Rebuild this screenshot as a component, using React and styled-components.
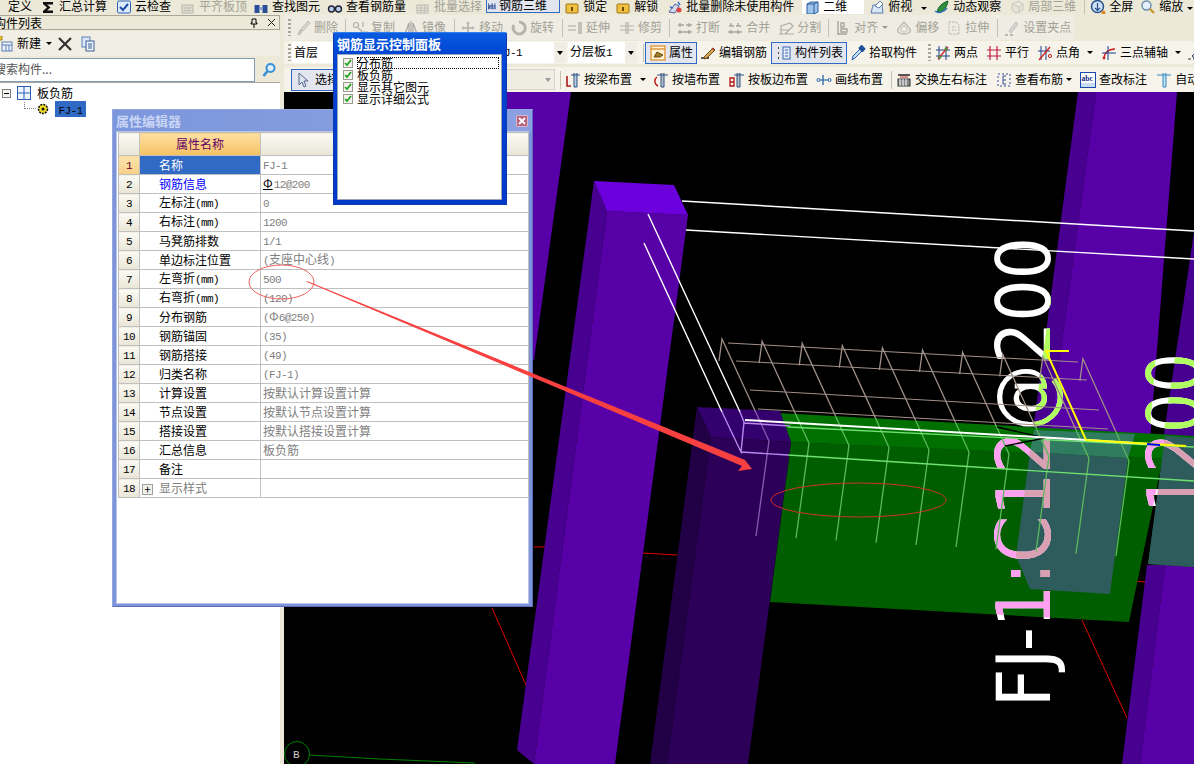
import React from "react";
import styled, { createGlobalStyle } from "styled-components";

const GlobalStyle = createGlobalStyle`
  html, body {
    margin: 0;
    padding: 0;
    background: #ece9d8;
  }
  body {
    font-family: "Noto Sans CJK SC", "Liberation Sans", sans-serif;
    font-size: 12px;
    color: #000;
  }
`;

const Page = styled.div`
  position: relative;
  width: 1194px;
  height: 764px;
  overflow: hidden;
  background: #ece9d8;
  line-height: 14px;
`;

const TopBar = styled.div`
  display: flex;
  align-items: flex-end;
  height: 14px;
  overflow: hidden;
  padding-left: 8px;
  box-sizing: border-box;
  white-space: nowrap;
  & > * { margin-bottom: -2px; }
`;

const Body = styled.div`
  display: flex;
  height: 750px;
`;

const LeftPanel = styled.div`
  width: 280px;
  display: flex;
  flex-direction: column;
  flex-shrink: 0;
`;

const PanelHead = styled.div`
  display: flex;
  align-items: center;
  height: 15px;
  margin-top: 1px;
  border: 1px solid #aca899;
  border-left: 0;
  box-sizing: border-box;
  padding-right: 3px;
  background: #ece9d8;
  span { margin-left: -6px; flex: 1; }
  svg { margin-left: 8px; }
`;

const PanelTools = styled.div`
  display: flex;
  align-items: center;
  height: 25px;
  margin-top: 1px;
  background: #f1efe5;
`;

const SearchRow = styled.div`
  display: flex;
  height: 24px;
  margin-top: 2px;
  gap: 3px;
`;

const SearchBox = styled.div`
  width: 255px;
  box-sizing: border-box;
  background: #fff;
  border: 1px solid #7f9db9;
  border-left: 0;
  color: #555;
  display: flex;
  align-items: center;
  overflow: hidden;
  span { margin-left: -6px; margin-top: -2px; white-space: nowrap; }
`;

const SearchBtn = styled.div`
  flex: 1;
  display: flex;
  align-items: center;
  justify-content: center;
`;

const Tree = styled.div`
  flex: 1;
  background: #fff;
  padding-top: 2px;
  border-top: 1px solid #aca899;
`;

const TreeRow = styled.div`
  display: flex;
  align-items: center;
  height: 16px;
  padding-left: ${(p) => p.$indent}px;
`;

const Expander = styled.span`
  width: 9px;
  height: 9px;
  box-sizing: border-box;
  border: 1px solid #808080;
  position: relative;
  margin-right: 6px;
  background: #f4f4f0;
  &::after {
    content: "";
    position: absolute;
    left: 1px;
    right: 1px;
    top: 3px;
    height: 1px;
    background: #000;
  }
`;

const TreeText = styled.span`
  margin-left: 6px;
`;

const Dots = styled.span`
  width: 12px;
  height: 7px;
  margin-top: -7px;
  margin-right: 1px;
  border-left: 1px dotted #808080;
  border-bottom: 1px dotted #808080;
  box-sizing: border-box;
`;

const Picked = styled.span`
  background: #316ac5;
  color: #000;
  width: 31px;
  height: 16px;
  line-height: 16px;
  text-align: center;
  margin-left: 6px;
`;

const Splitter = styled.div`
  width: 4px;
  flex-shrink: 0;
`;

const RightSide = styled.div`
  flex: 1;
  display: flex;
  flex-direction: column;
  min-width: 0;
`;

const ToolRow = styled.div`
  display: flex;
  align-items: center;
  height: ${(p) => p.$h || 25}px;
  margin-top: ${(p) => p.$mt || 0}px;
  flex-shrink: 0;
  background: ${(p) => p.$bg || "#f5f3ea"};
  width: ${(p) => (p.$fit ? "791px" : "auto")};
  border-radius: 3px;
  white-space: nowrap;
  overflow: hidden;
`;

const ToolBox = styled.div`
  display: flex;
  align-items: center;
  flex-shrink: 0;
  height: ${(p) => (p.$tight ? "18px" : p.$active ? "22px" : "18px")};
  gap: ${(p) => (p.$tight ? 0 : 3)}px;
  margin-left: ${(p) => p.$ml || 0}px;
  color: ${(p) => (p.$off ? "#a3a196" : "#000")};
  box-sizing: border-box;
  padding: ${(p) => (p.$tight ? "4px 12px 0 1px" : p.$active ? "0 3px 0 4px" : "0")};
  border: ${(p) => (p.$active ? "1px solid #316ac5" : "0")};
  background: ${(p) => (p.$active ? "#e3e6ee" : "transparent")};
  svg { opacity: ${(p) => (p.$off ? 0.42 : 1)}; }
`;

const TopActive = styled.div`
  display: flex;
  align-self: flex-end;
  margin-bottom: 1px !important;
`;

const ToolLabel = styled.span`
  margin-top: -2px;
`;

const IconBox = styled.span`
  display: flex;
  width: ${(p) => p.$w || 16}px;
  height: 16px;
  flex-shrink: 0;
`;

const Sep = styled.span`
  width: 1px;
  height: 18px;
  flex-shrink: 0;
  background: #c5c2b2;
  margin-left: ${(p) => p.$ml}px;
`;

const Caret = styled.span`
  width: 0;
  height: 0;
  flex-shrink: 0;
  align-self: center;
  border-left: 3px solid transparent;
  border-right: 3px solid transparent;
  border-top: 3px solid ${(p) => (p.$off ? "#999" : "#000")};
  margin-left: ${(p) => p.$ml}px;
`;

const Grip = styled.span`
  width: 3px;
  height: 17px;
  flex-shrink: 0;
  margin-left: ${(p) => p.$ml}px;
  background: repeating-linear-gradient(to bottom, #a8a698 0 2px, transparent 2px 4px);
`;

const Combo = styled.div`
  display: flex;
  align-items: center;
  justify-content: space-between;
  flex-shrink: 0;
  box-sizing: border-box;
  height: 21px;
  width: ${(p) => p.$w}px;
  margin-left: ${(p) => p.$ml || 0}px;
  padding-left: ${(p) => p.$pad || 2}px;
  background: ${(p) => (p.$off ? "#efede2" : "#fff")};
  border: ${(p) => (p.$off ? "1px solid #d8d5c6" : "0")};
`;

const ComboArrow = styled.span`
  width: 12px;
  height: 100%;
  display: flex;
  align-items: center;
  justify-content: center;
  background: #f0eee4;
  &::after {
    content: "";
    border-left: 3px solid transparent;
    border-right: 3px solid transparent;
    border-top: 4px solid ${(p) => (p.$off ? "#999" : "#000")};
  }
`;

const TopCombo = styled(Combo)`
  height: 18px;
  gap: 2px;
  justify-content: flex-start;
  padding-left: 3px;
`;

const Viewport = styled.div`
  flex: 1;
  background: #000;
  overflow: hidden;
  svg { display: block; }
`;

const Lat = styled.span`
  font-family: "Liberation Mono", monospace;
  font-size: 11px;
  letter-spacing: -0.6px;
`;

const EditorWindow = styled.div`
  position: absolute;
  left: 112px;
  top: 109px;
  width: 421px;
  height: 498px;
  box-sizing: border-box;
  display: flex;
  flex-direction: column;
  background: #7d93da;
  border: 1px solid #93a6de;
  border-right-color: #5a6cc0;
  border-bottom-color: #5a6cc0;
  z-index: 2;
`;

const EditorTitle = styled.div`
  display: flex;
  align-items: center;
  justify-content: space-between;
  height: 22px;
  flex-shrink: 0;
  padding: 0 4px 0 3px;
  background: linear-gradient(to right, #7c97dc, #8aa0e2);
  color: #c9d5f5;
  font-weight: 700;
  font-size: 13px;
`;

const CloseBtn = styled.span`
  width: 12px;
  height: 12px;
  box-sizing: border-box;
  border: 1px solid #d9b8c8;
  border-radius: 1px;
  background: #b9607f;
  display: flex;
  align-items: center;
  justify-content: center;
`;

const EditorBody = styled.div`
  flex: 1;
  margin: 0 4px 3px 4px;
  background: #fff;
  padding-left: 1px;
  box-shadow: 0 0 0 1px #b9c4e8;
`;

const Table = styled.table`
  border-collapse: collapse;
  table-layout: fixed;
  width: 410px;
  td, th {
    border: 1px solid #c0c0c0;
    padding: 0;
    height: 19px;
    line-height: 16px;
    font-weight: 400;
    box-sizing: border-box;
    overflow: hidden;
    white-space: nowrap;
  }
`;

const HeadIndex = styled.th`
  height: 23px !important;
  background: linear-gradient(to bottom, #fbfaf4, #e9e6d6);
`;

const HeadName = styled.th`
  height: 23px !important;
  color: #660066;
  background: linear-gradient(to bottom, #fde0a4, #f4c161);
`;

const HeadValue = styled.th`
  height: 23px !important;
  background: linear-gradient(to bottom, #fbfaf4, #e9e6d6);
`;

const IndexCell = styled.td`
  text-align: center;
  color: ${(p) => (p.$current ? "#660033" : "#000")};
  background: ${(p) => (p.$current ? "linear-gradient(to bottom, #fde4ad, #f7cf85)" : "linear-gradient(to bottom, #fbfaf4, #e9e6d6)")};
`;

const NameCell = styled.td`
  color: ${(p) => p.$color || "#000"};
  background: ${(p) => (p.$current ? "#316ac5" : "#fff")};
  padding-left: ${(p) => (p.$plus ? "2px" : "19px")} !important;
`;

const ValueCell = styled.td`
  color: #808080;
  padding-left: 2px !important;
`;

const PlusBox = styled.span`
  display: inline-flex;
  align-items: center;
  justify-content: center;
  width: 11px;
  height: 11px;
  box-sizing: border-box;
  border: 1px solid #a0a0a0;
  background: #f0f0ea;
  color: #000;
  margin-right: 6px;
  vertical-align: -1px;
  font-size: 11px;
  line-height: 9px;
`;

const RebarMark = styled.span`
  color: #000;
  text-decoration: ${(p) => (p.$under ? "underline" : "none")};
  margin-right: 1px;
`;

const ControlPanel = styled.div`
  position: absolute;
  left: 333px;
  top: 32px;
  width: 174px;
  height: 173px;
  box-sizing: border-box;
  display: flex;
  flex-direction: column;
  background: linear-gradient(to bottom, #0a5ce0, #0046d4 20px, #0038c8);
  border: 1px solid #0a3cb0;
  border-top-color: #2f7cf0;
  border-radius: 2px 2px 0 0;
  z-index: 3;
`;

const ControlTitle = styled.div`
  height: 20px;
  flex-shrink: 0;
  padding-left: 3px;
  padding-top: 3px;
  box-sizing: border-box;
  color: #fff;
  font-weight: 700;
  font-size: 13px;
  line-height: 15px;
`;

const ControlList = styled.div`
  flex: 1;
  margin: 1px 4px 4px 3px;
  background: #fff;
  border: 1px solid #9aa4b4;
  padding-top: 2px;
`;

const ControlItem = styled.div`
  display: flex;
  align-items: center;
  height: 12px;
  line-height: 12px;
  padding-left: 5px;
  gap: 4px;
`;

const CheckBox = styled.span`
  display: flex;
  width: 10px;
  height: 10px;
  box-sizing: border-box;
  border: 1px solid #9a9a8e;
  background: #f2f2ea;
  flex-shrink: 0;
`;

const ItemLabel = styled.span`
  flex: 1;
  margin-right: 2px;
  outline: ${(p) => (p.$focus ? "1px dotted #000" : "none")};
  outline-offset: -1px;
`;

const Overlay = styled.svg`
  position: absolute;
  left: 0;
  top: 0;
  width: 1194px;
  height: 764px;
  pointer-events: none;
  z-index: 4;
`;

const icons = {
  sigma: <path d="M3 3h10v2.5H7l3.5 3L7 11.5h6V14H3v-2l4-3.5L3 5z" fill="#111" />,
  check: (
    <>
      <rect x="1.5" y="2" width="13" height="12" rx="1.5" fill="#dceafc" stroke="#2a5fb8" />
      <path d="M4 8l3 3 5-6" fill="none" stroke="#1c4fa8" strokeWidth="2" />
    </>
  ),
  doc: (
    <>
      <rect x="2" y="6" width="11" height="8" fill="#c8c8c0" stroke="#777" />
      <path d="M4 9h7M4 11.5h7" stroke="#777" />
    </>
  ),
  find: (
    <>
      <rect x="1.5" y="6" width="5" height="8" fill="#2a4f96" />
      <rect x="9.5" y="6" width="5" height="8" fill="#2a4f96" />
      <rect x="6.5" y="8" width="3" height="3" fill="#8aa4d4" />
    </>
  ),
  glasses: (
    <>
      <circle cx="4.5" cy="10" r="3" fill="#b8d0ec" stroke="#223" strokeWidth="1.4" />
      <circle cx="11.5" cy="10" r="3" fill="#b8d0ec" stroke="#223" strokeWidth="1.4" />
    </>
  ),
  selectGrid: (
    <>
      <path d="M2 6h11v8H2z" fill="#ddd" stroke="#777" />
      <path d="M2 9h11M2 11.5h11M6 6v8M9.5 6v8" stroke="#888" />
    </>
  ),
  rebar3d: <path d="M1 4v9M6 4v9M10 4v9M0 8h11M0 11h11M1 11l5-5" fill="none" stroke="#1d3f8a" strokeWidth="1.2" />,
  lock: (
    <>
      <rect x="2" y="5" width="12" height="9" rx="1" fill="#f0c040" stroke="#a07010" />
      <rect x="7" y="8" width="2" height="4" fill="#704a00" />
    </>
  ),
  eraser: (
    <>
      <path d="M2 13l6-8 4 2-4 7z" fill="#d8d8e8" stroke="#5060a0" />
      <circle cx="12" cy="11" r="2.5" fill="#e04040" />
      <path d="M3 8l3 1M11 3l2 3" stroke="#3a70d0" strokeWidth="1.5" />
    </>
  ),
  box3d: (
    <>
      <path d="M2 5l4-2 7 0v10l-4 2H2z" fill="#9ec4ec" stroke="#2b5c9c" />
      <path d="M9 5v10M2 5h7l4-2" fill="none" stroke="#2b5c9c" />
    </>
  ),
  topView: (
    <>
      <path d="M2 14l2-8h9l1 8z" fill="#d8e6f6" stroke="#5a7eb0" />
      <path d="M6 7l5-5 3 3-4 4z" fill="#fff" stroke="#5a7eb0" />
    </>
  ),
  orbit: (
    <>
      <path d="M3 13c1-5 5-9 11-11-1 6-4 10-8 11z" fill="#2f8f3f" stroke="#14602a" />
      <path d="M1 12c4 3 9 1 12-3" fill="none" stroke="#3070c0" strokeWidth="1.4" />
    </>
  ),
  local3d: <path d="M3 5l7-3 4 3v6l-7 3-4-3z M3 5l7 3 4-3M10 8v6" fill="#ddd" stroke="#999" />,
  fullscreen: (
    <>
      <circle cx="7.5" cy="7.5" r="6" fill="#cfe0f4" stroke="#25508c" strokeWidth="1.5" />
      <path d="M7.5 4v7M5 9l2.5 2.5L10 9" fill="none" stroke="#25508c" strokeWidth="1.2" />
      <circle cx="13.5" cy="13.5" r="2" fill="#e08a20" />
    </>
  ),
  zoom: (
    <>
      <circle cx="6.5" cy="6.5" r="4.5" fill="#e4f0fc" stroke="#6a8ab0" strokeWidth="1.4" />
      <path d="M10 10l4 4" stroke="#c8982a" strokeWidth="2.4" />
    </>
  ),
  brush: (
    <>
      <path d="M2 15l3-6 3 2-3 4z" fill="#888" />
      <path d="M6 9L13 1l2 2-7 8z" fill="#bbb" stroke="#777" />
    </>
  ),
  copy: (
    <>
      <circle cx="4" cy="5" r="2.5" fill="none" stroke="#555" strokeWidth="1.2" />
      <path d="M6 8l4 3M11 2v5M9 12h6v3H9z" fill="none" stroke="#555" strokeWidth="1.2" />
    </>
  ),
  mirror: <path d="M8 1v14M2 14L6 3v11zM14 14L10 3v11z" fill="none" stroke="#444" strokeWidth="1.2" />,
  move: <path d="M8 1l2 3H9v3h3V6l3 2-3 2V9H9v3h1l-2 3-2-3h1V9H4v1L1 8l3-2v1h3V4H6z" fill="#777" />,
  rotate: <path d="M8 2a6 6 0 1 1-5 3" fill="none" stroke="#666" strokeWidth="3" />,
  extend: <path d="M1 6h8M1 10h8M12 2v12M14 2v12" fill="none" stroke="#444" strokeWidth="1.2" />,
  trim: <path d="M1 6h14M1 10h14M7 2v12M9 2v12" fill="none" stroke="#666" strokeWidth="1.2" />,
  breakLine: <path d="M1 5h6M9 5h6M1 12h14M3 3v4M12 3v4M3 10v4M12 10v4" fill="none" stroke="#444" strokeWidth="1.4" />,
  merge: <path d="M1 12h14M4 3v3M11 3v3M2 6h5M9 6h5M4 10v4M11 10v4" fill="none" stroke="#444" strokeWidth="1.4" />,
  split: <path d="M1 14h15M3 14V6l9-3M12 3l3 3-8 8M3 10h8" fill="none" stroke="#555" strokeWidth="1.2" />,
  align: <path d="M3 1v14M3 14h9M6 3h3v4H6zM6 9h6v3H6z" fill="none" stroke="#444" strokeWidth="1.4" />,
  offset: (
    <>
      <path d="M8 2l6 7c1 4-2 5-6 5S1 13 2 9z" fill="none" stroke="#777" strokeWidth="1.4" />
      <path d="M8 5l3 4c1 2-1 3-3 3s-4-1-3-3z" fill="none" stroke="#777" />
    </>
  ),
  stretch: <path d="M3 2h7l3 3v9H3zM6 7h4M6 10h4" fill="none" stroke="#666" strokeDasharray="2 1" />,
  grips: (
    <>
      <path d="M5 11L12 2l2 2-7 9z" fill="#bbb" stroke="#777" />
      <path d="M1 15h3M6 15h3" stroke="#444" strokeWidth="1.4" />
    </>
  ),
  prop: (
    <>
      <rect x="1" y="1" width="14" height="14" fill="#fff3d8" stroke="#e09a3e" strokeWidth="1.4" />
      <path d="M1 4h14" stroke="#e09a3e" strokeWidth="1.4" />
      <path d="M4 12l3-5 6 3-3 2z" fill="#a07a28" stroke="#6a5018" />
    </>
  ),
  editRebar: (
    <>
      <path d="M1 13h8" stroke="#222" strokeWidth="1.4" />
      <path d="M5 11l8-8 2 2-8 8-3 1z" fill="#d8a850" stroke="#6a4818" />
      <path d="M12 3l2 2" stroke="#c03030" strokeWidth="1.4" />
    </>
  ),
  list: (
    <>
      <path d="M2 3h2M2 8h2M2 13h2" stroke="#444" strokeWidth="2" strokeDasharray="1 1" />
      <rect x="7" y="2" width="7" height="12" fill="#e4ecf8" stroke="#3868b0" />
      <path d="M9 5h3M9 8h3M9 11h3" stroke="#3868b0" />
    </>
  ),
  pick: (
    <>
      <path d="M2 15l1-4 7-7 2 2-7 7z" fill="#c8e0f8" stroke="#1f5aa8" />
      <rect x="9" y="1" width="6" height="5" rx="1" transform="rotate(45 12 3.5)" fill="#1f4f98" />
    </>
  ),
  twoPoints: (
    <>
      <path d="M4 1v14M11 1v14M1 5h14M1 11h14" stroke="#1d3f8a" />
      <path d="M3 14L13 2" stroke="#d02020" strokeWidth="1.3" />
      <circle cx="5" cy="12" r="1.5" fill="#50902a" />
      <circle cx="11" cy="4" r="1.5" fill="#50902a" />
    </>
  ),
  parallel: <path d="M4 1v14M11 1v14M1 5h14M1 11h14" stroke="#c02040" strokeWidth="1.2" />,
  pointAngle: (
    <>
      <path d="M4 1v14M9 1v14M1 6h12" stroke="#1d3f8a" />
      <path d="M2 15L13 2" stroke="#d02020" strokeWidth="1.3" />
      <circle cx="13" cy="11" r="1.6" fill="none" stroke="#d02020" />
    </>
  ),
  threePoint: (
    <>
      <path d="M3 14c0-6 4-10 11-10" fill="none" stroke="#d02020" strokeWidth="1.3" />
      <path d="M7 1v14M1 8h14" stroke="#1d3f8a" />
      <circle cx="3" cy="13" r="1.4" fill="#d02020" />
    </>
  ),
  more: <path d="M1 14h3M6 14h3M5 11l6-6 2 2-6 6z" fill="#bcd" stroke="#345" />,
  cursor: <path d="M3 1v12l3-3 2 5 2-1-2-5h4z" fill="#dde4f0" stroke="#56688a" />,
  beamPlace: (
    <>
      <path d="M2 4v10h4" fill="none" stroke="#b01818" strokeWidth="1.6" />
      <path d="M6 3h9M9 1v14h3V1" fill="#b8d0e8" stroke="#30507e" />
    </>
  ),
  wallPlace: (
    <>
      <path d="M4 5c-3 2-3 7 1 9" fill="none" stroke="#c01818" strokeWidth="1.4" />
      <path d="M4 3h11M8 1v14h3V1" fill="#b8bec8" stroke="#30507e" />
    </>
  ),
  edgePlace: (
    <>
      <path d="M1 6h4v8H1zM1 10h4" fill="none" stroke="#b01818" strokeWidth="1.3" />
      <path d="M5 3h10M8 1v14h3V1" fill="#b8bec8" stroke="#30507e" />
    </>
  ),
  linePlace: (
    <>
      <path d="M1 8h14M7 3v10" stroke="#1f58a8" strokeWidth="1.2" />
      <circle cx="2.5" cy="8" r="1.5" fill="#fff" stroke="#1f58a8" />
      <circle cx="13.5" cy="8" r="1.5" fill="#fff" stroke="#1f58a8" />
    </>
  ),
  swap: (
    <>
      <path d="M2 3h12" stroke="#222" strokeWidth="1.4" />
      <rect x="2" y="7" width="12" height="7" fill="#8a8a8a" stroke="#333" />
      <path d="M4 7v7M7 7v7M10 7v7" stroke="#fff" />
      <path d="M4 5h8" stroke="#c03030" />
    </>
  ),
  viewRebar: (
    <>
      <rect x="2" y="2" width="12" height="12" fill="none" stroke="#3a4a9a" strokeDasharray="2 2" />
      <path d="M10 4H7v8h3M7 8h3" fill="none" stroke="#3a4a9a" />
    </>
  ),
  autoPlace: <path d="M1 3h14M7 1v14h3V1" fill="#bfe0f4" stroke="#3a8ac0" />,
  newItem: (
    <>
      <rect x="4" y="6" width="10" height="9" fill="#eef4fc" stroke="#5a7eb8" />
      <path d="M4 9h10M8 9v6M11 9v6" stroke="#5a7eb8" />
      <path d="M0 0h4v4H0z" fill="#f0c838" stroke="#a88010" />
    </>
  ),
  cross: <path d="M2 2l12 12M14 2L2 14" stroke="#333" strokeWidth="2.2" />,
  copyDoc: (
    <>
      <rect x="2" y="1" width="8" height="10" fill="#dce8f8" stroke="#5a7eb8" />
      <rect x="6" y="5" width="8" height="10" fill="#eef4fc" stroke="#3a5f98" />
      <path d="M8 8h4M8 10h4M8 12h4" stroke="#3a5f98" />
    </>
  ),
};

const Icon = ({ name }) => (
  <svg width="16" height="16" viewBox="0 0 16 16">
    {icons[name]}
  </svg>
);

const AbcIcon = () => (
  <svg width="16" height="16" viewBox="0 0 16 16">
    <rect x="0.5" y="0.5" width="15" height="15" fill="#fff" stroke="#1c48b0" />
    <rect x="1" y="11" width="14" height="4" fill="#c8dcf4" />
    <text x="1.5" y="9" fontSize="7.5" fontWeight="700" fontFamily="Liberation Serif, serif" fill="#102a80">abc</text>
  </svg>
);

// margin-left of every item is the free space after the one before it
const topItems = [
  { label: "定义" },
  { icon: "sigma", label: "汇总计算", ml: 8 },
  { icon: "check", label: "云检查", ml: 9 },
  { icon: "doc", label: "平齐板顶", ml: 9, off: true },
  { icon: "find", label: "查找图元", ml: 6 },
  { icon: "glasses", label: "查看钢筋量", ml: 7 },
  { icon: "selectGrid", label: "批量选择", ml: 9, off: true },
];

const topItemsMiddle = [
  { icon: "lock", label: "锁定", ml: 4 },
  { icon: "lock", label: "解锁", ml: 8 },
  { icon: "eraser", label: "批量删除未使用构件", ml: 9 },
];

const topItemsEnd = [
  { icon: "topView", label: "俯视", ml: 5 },
  { caret: true, ml: 9 },
  { icon: "orbit", label: "动态观察", ml: 7 },
  { icon: "local3d", label: "局部三维", ml: 8, off: true },
  { sep: true, ml: 8 },
  { icon: "fullscreen", label: "全屏", ml: 5 },
  { icon: "zoom", label: "缩放", ml: 7 },
  { caret: true, ml: 4 },
];

const editItems = [
  { grip: true, ml: 4 },
  { icon: "brush", label: "删除", ml: 4, off: true },
  { sep: true, ml: 7 },
  { icon: "copy", label: "复制", ml: 6, off: true },
  { icon: "mirror", label: "镜像", ml: 8, off: true },
  { sep: true, ml: 8 },
  { icon: "move", label: "移动", ml: 5, off: true },
  { icon: "rotate", label: "旋转", ml: 8, off: true },
  { sep: true, ml: 8 },
  { icon: "extend", label: "延伸", ml: 4, off: true },
  { icon: "trim", label: "修剪", ml: 9, off: true },
  { sep: true, ml: 7 },
  { icon: "breakLine", label: "打断", ml: 7, off: true },
  { icon: "merge", label: "合并", ml: 7, off: true },
  { icon: "split", label: "分割", ml: 8, off: true },
  { sep: true, ml: 7 },
  { icon: "align", label: "对齐", ml: 6, off: true },
  { caret: true, off: true, ml: 4 },
  { icon: "offset", label: "偏移", ml: 8, off: true },
  { icon: "stretch", label: "拉伸", ml: 7, off: true },
  { sep: true, ml: 8 },
  { icon: "grips", label: "设置夹点", ml: 6, off: true },
];

const floorItems = [
  { sep: true, ml: 6 },
  { icon: "prop", label: "属性", ml: 1, active: true },
  { icon: "editRebar", label: "编辑钢筋", ml: 3 },
  { icon: "list", label: "构件列表", ml: 4, active: true },
  { icon: "pick", label: "拾取构件", ml: 3 },
  { grip: true, ml: 11 },
  { icon: "twoPoints", label: "两点", ml: 4 },
  { icon: "parallel", label: "平行", ml: 8 },
  { icon: "pointAngle", label: "点角", ml: 8 },
  { caret: true, ml: 7 },
  { icon: "threePoint", label: "三点辅轴", ml: 8 },
  { caret: true, ml: 7 },
  { icon: "more", ml: 6 },
];

const placeItems = [
  { sep: true, ml: 5 },
  { icon: "beamPlace", label: "按梁布置", ml: 4 },
  { caret: true, ml: 8 },
  { icon: "wallPlace", label: "按墙布置", ml: 7 },
  { icon: "edgePlace", label: "按板边布置", ml: 9 },
  { icon: "linePlace", label: "画线布置", ml: 8 },
  { sep: true, ml: 8 },
  { icon: "swap", label: "交换左右标注", ml: 4 },
  { icon: "viewRebar", label: "查看布筋", ml: 9 },
  { caret: true, ml: 3 },
  { abc: true, label: "查改标注", ml: 8 },
  { icon: "autoPlace", label: "自动布筋", ml: 9 },
];

const renderItems = (items) =>
  items.map((it, i) => {
    if (it.sep) return <Sep key={i} $ml={it.ml} />;
    if (it.grip) return <Grip key={i} $ml={it.ml} />;
    if (it.caret) return <Caret key={i} $ml={it.ml} $off={it.off} />;
    return (
      <ToolBox key={i} $ml={it.ml} $off={it.off} $active={it.active}>
        {it.icon && (
          <IconBox $w={it.w}>
            <Icon name={it.icon} />
          </IconBox>
        )}
        {it.abc && (
          <IconBox>
            <AbcIcon />
          </IconBox>
        )}
        {it.label && <ToolLabel>{it.label}</ToolLabel>}
      </ToolBox>
    );
  });

// ascii runs use the narrow latin font, like the original bitmap font
const mixed = (s) =>
  s.split(/([\x00-\x7f]+)/).map((part, i) => (/[\x00-\x7f]/.test(part) ? <Lat key={i}>{part}</Lat> : part));

const rows = [
  { name: "名称", value: "FJ-1", current: true, color: "#fff" },
  { name: "钢筋信息", value: "12@200", mark: "Φ", under: true, color: "#0000ff" },
  { name: "左标注(mm)", value: "0" },
  { name: "右标注(mm)", value: "1200" },
  { name: "马凳筋排数", value: "1/1" },
  { name: "单边标注位置", value: "(支座中心线)" },
  { name: "左弯折(mm)", value: "500" },
  { name: "右弯折(mm)", value: "(120)" },
  { name: "分布钢筋", value: "(Φ6@250)" },
  { name: "钢筋锚固", value: "(35)" },
  { name: "钢筋搭接", value: "(49)" },
  { name: "归类名称", value: "(FJ-1)" },
  { name: "计算设置", value: "按默认计算设置计算" },
  { name: "节点设置", value: "按默认节点设置计算" },
  { name: "搭接设置", value: "按默认搭接设置计算" },
  { name: "汇总信息", value: "板负筋" },
  { name: "备注", value: "" },
  { name: "显示样式", value: "", plus: true, color: "#808080" },
];

const controlItems = ["分布筋", "板负筋", "显示其它图元", "显示详细公式"];

const pts = (list) => list.map((p) => p.join(",")).join(" ");

const plateTop = [[778, 413], [1194, 436], [1194, 462], [791, 442]];
const plateFront = [[791, 442], [1163, 458], [1129, 622], [770, 602]];
const tealTop = [[1034, 430], [1135, 434], [1128, 458], [1030, 452]];
const tealFront = [[1030, 452], [1128, 458], [1110, 594], [1030, 589], [1016, 556]];
const tealRight = [[1165, 436], [1194, 438], [1194, 567], [1148, 564]];
const pillarFront = [[1096, 92], [1177, 92], [1150, 440], [1050, 430]];
const pillarLeft = [[1078, 92], [1096, 92], [1050, 430], [1033, 430]];
const sidePillar = [[1194, 232], [1194, 440], [1163, 440]];

const hooks = Array.from({ length: 10 }, (_, i) => {
  const ax = 722 + 40.1 * i;
  const ay = 339 + 2.2 * i;
  const kx = 769 + 40 * i;
  const ky = 441 + 2.2 * i;
  const t = (413 + 0.055 * (ax - 778) - ay) / (ky - ay - 0.055 * (kx - ax));
  return {
    ax,
    ay,
    kx,
    ky,
    mx: ax + (kx - ax) * t,
    my: ay + (ky - ay) * t,
    bx: 756 + 40 * i,
    by: 536 + 2.2 * i,
    soft: i === 0,
  };
});

const Scene = () => (
  <svg width="910" height="672" viewBox="284 92 910 672">
    <defs>
      <text id="label-a" transform="rotate(-90 1050 707)" x="1050" y="707" fontFamily="DejaVu Sans, sans-serif" fontSize="74" textLength="470" lengthAdjust="spacingAndGlyphs">
        FJ-1:C12@200
      </text>
      <text id="label-b" transform="rotate(-90 1201 513)" x="1201" y="513" fontFamily="DejaVu Sans, sans-serif" fontSize="74" textLength="160" lengthAdjust="spacingAndGlyphs">
        1200
      </text>
      <clipPath id="on-plate">
        <polygon points={pts(plateTop)} />
        <polygon points={pts(plateFront)} />
      </clipPath>
      <clipPath id="on-teal">
        <polygon points={pts(tealTop)} />
        <polygon points={pts(tealFront)} />
        <polygon points={pts(tealRight)} />
      </clipPath>
      <clipPath id="on-pillar">
        <polygon points={pts([[1078, 92], [1177, 92], [1150, 430], [1033, 430]])} />
        <polygon points={pts([[1194, 232], [1194, 436], [1163, 436]])} />
      </clipPath>
    </defs>

    <path d="M534 547h12M642 553l35 2M1135 581l10 1M492 608l34 77M1082 620l45 98" stroke="#e00000" fill="none" />
    <polyline points="309,755 380,759 475,763" fill="none" stroke="#008000" />
    <circle cx="297" cy="754" r="12.5" fill="none" stroke="#008000" />
    <text x="293" y="758" fontFamily="Liberation Mono, monospace" fontSize="11" fill="#d0d0d0">B</text>

    <polygon points="505,92 571,92 534,360 500,360" fill="#5800a8" />
    <polygon points="594,181 607,211 534,764 517,750" fill="#480090" />
    <polygon points="607,211 688,215 615,764 534,764" fill="#5800a8" />
    <polygon points="594,181 674,185 688,215 607,211" fill="#6c00dc" />

    <polygon points={pts(pillarLeft)} fill="#480090" />
    <polygon points={pts(pillarFront)} fill="#5800a8" />
    <polygon points={pts(sidePillar)} fill="#480090" />
    <polygon points="1147,565 1165,565 1140,764 1122,764" fill="#480090" />
    <polygon points="1165,565 1194,565 1194,764 1140,764" fill="#5800a8" />

    <polygon points={pts(plateTop)} fill="#007000" />
    <polygon points={pts(plateFront)} fill="#005e00" />
    <polygon points="1163,458 1194,460 1194,567 1148,564" fill="#005e00" />

    <polygon points="697,407 780,411 791,442 711,437" fill="#34006e" />
    <polygon points="697,407 711,437 667,764 650,764" fill="#220046" />
    <polygon points="711,437 791,442 748,764 667,764" fill="#2c0058" />

    <polygon points={pts(tealTop)} fill="#2f7c60" />
    <polygon points={pts(tealFront)} fill="#2e5c5c" />
    <polygon points={pts(tealRight)} fill="#2e5c5c" />

    <use href="#label-a" fill="#fff" />
    <use href="#label-a" fill="#b0ff60" clipPath="url(#on-pillar)" />
    <use href="#label-a" fill="#ffa0f0" clipPath="url(#on-plate)" />
    <use href="#label-a" fill="#d8a0b0" clipPath="url(#on-teal)" />
    <use href="#label-b" fill="#fff" />
    <use href="#label-b" fill="#b0ff60" clipPath="url(#on-pillar)" />
    <use href="#label-b" fill="#ffa0f0" clipPath="url(#on-plate)" />
    <use href="#label-b" fill="#d8a0b0" clipPath="url(#on-teal)" />

    <g fill="none" stroke="#a09088">
      <path d="M728 343L1078 362M736 361L1087 380M750 390L1099 410M758 409L1108 429" />
    </g>
    {hooks.map((h) => (
      <g key={h.ax} fill="none" strokeWidth="1.3">
        <path d={`M${h.ax - 3} ${h.ay + 22}L${h.ax} ${h.ay}L${h.mx} ${h.my}`} stroke="#a09088" />
        <path d={`M${h.mx} ${h.my}L${h.kx} ${h.ky}L${h.bx} ${h.by}`} stroke={h.soft ? "#8a5cb0" : "#5cb85c"} />
      </g>
    ))}

    <g fill="none" strokeWidth="1.4">
      <path d="M682 201L1194 231M686 230L1194 259" stroke="#fff" />
      <path d="M648 214L740 412M644 243L722 412" stroke="#fff" />
      <path d="M740 412L744 422L741 452L722 412M744 423L790 426M741 452L788 455" stroke="#b888f0" />
      <path d="M788 427L1194 447M788 455L1194 481" stroke="#70e070" />
      <path d="M997 427L1045 438L1005 446" stroke="#000" />
    </g>
    <path d="M745 420L1087 440L1150 444" fill="none" stroke="#fff" strokeWidth="2" />
    <path d="M1069 351H1046L1086 440L1186 446" fill="none" stroke="#ffff00" strokeWidth="2" />
    <path d="M1147 444L1160 445" stroke="#0000ff" strokeWidth="2" />
  </svg>
);

export default function App() {
  return (
    <Page>
      <GlobalStyle />
      <TopBar>
        {renderItems(topItems)}
        <TopActive>
          <ToolBox $ml={4} $active $tight>
            <IconBox $w={11}>
              <Icon name="rebar3d" />
            </IconBox>
            <ToolLabel>钢筋三维</ToolLabel>
          </ToolBox>
        </TopActive>
        {renderItems(topItemsMiddle)}
        <TopCombo $w={62} $ml={8}>
          <IconBox>
            <Icon name="box3d" />
          </IconBox>
          <ToolLabel>二维</ToolLabel>
        </TopCombo>
        {renderItems(topItemsEnd)}
      </TopBar>
      <Body>
        <LeftPanel>
          <PanelHead>
            <span>构件列表</span>
            <svg width="10" height="10" viewBox="0 0 10 10">
              <path d="M3 1h4v4h1v1H2V5h1zM5 6v4" fill="none" stroke="#000" />
            </svg>
            <svg width="9" height="9" viewBox="0 0 9 9">
              <path d="M1 1l7 7M8 1L1 8" stroke="#222" />
            </svg>
          </PanelHead>
          <PanelTools>
            <ToolBox $ml={-2}>
              <IconBox>
                <Icon name="newItem" />
              </IconBox>
              <ToolLabel>新建</ToolLabel>
            </ToolBox>
            <Caret $ml={5} />
            <ToolBox $ml={5}>
              <IconBox>
                <Icon name="cross" />
              </IconBox>
            </ToolBox>
            <ToolBox $ml={7}>
              <IconBox>
                <Icon name="copyDoc" />
              </IconBox>
            </ToolBox>
          </PanelTools>
          <SearchRow>
            <SearchBox>
              <span>搜索构件...</span>
            </SearchBox>
            <SearchBtn>
              <svg width="16" height="16" viewBox="0 0 16 16">
                <circle cx="9.5" cy="6" r="4" fill="#dff0fc" stroke="#3a90d8" strokeWidth="2" />
                <path d="M6.5 9L2.5 14" stroke="#3a90d8" strokeWidth="2.6" />
              </svg>
            </SearchBtn>
          </SearchRow>
          <Tree>
            <TreeRow $indent={2}>
              <Expander />
              <svg width="14" height="14" viewBox="0 0 14 14">
                <rect x="0.5" y="0.5" width="13" height="13" fill="#eef4fc" stroke="#2a5fb8" />
                <path d="M1 7h12M7 1v12" stroke="#2a5fb8" />
              </svg>
              <TreeText>板负筋</TreeText>
            </TreeRow>
            <TreeRow $indent={24}>
              <Dots />
              <svg width="12" height="12" viewBox="0 0 12 12">
                <circle cx="6" cy="6" r="4.5" fill="#f4e020" stroke="#111" strokeDasharray="2 1" strokeWidth="1.6" />
                <circle cx="6" cy="6" r="1.5" fill="#111" />
              </svg>
              <Picked>
                <Lat>FJ-1</Lat>
              </Picked>
            </TreeRow>
          </Tree>
        </LeftPanel>
        <Splitter />
        <RightSide>
          <ToolRow $fit $mt={1} $bg="#efede3">{renderItems(editItems)}</ToolRow>
          <ToolRow $mt={1} $h={23}>
            <Grip $ml={4} />
            <Combo $w={195} $ml={1}>
              <ToolLabel>首层</ToolLabel>
            </Combo>
            <Combo $w={77} $ml={2} $pad={9}>
              <Lat>FJ-1</Lat>
              <ComboArrow />
            </Combo>
            <Combo $w={69} $ml={2}>
              <ToolLabel>{mixed("分层板1")}</ToolLabel>
              <ComboArrow />
            </Combo>
            {renderItems(floorItems)}
          </ToolRow>
          <ToolRow $mt={3}>
            <ToolBox $ml={7} $active>
              <IconBox>
                <Icon name="cursor" />
              </IconBox>
              <ToolLabel>选择</ToolLabel>
            </ToolBox>
            <Combo $w={211} $ml={1} $off>
              <span />
              <ComboArrow $off />
            </Combo>
            {renderItems(placeItems)}
          </ToolRow>
          <Viewport>
            <Scene />
          </Viewport>
        </RightSide>
      </Body>

      <EditorWindow>
        <EditorTitle>
          <span>属性编辑器</span>
          <CloseBtn>
            <svg width="8" height="8" viewBox="0 0 8 8">
              <path d="M1 1l6 6M7 1L1 7" stroke="#fff" strokeWidth="1.8" />
            </svg>
          </CloseBtn>
        </EditorTitle>
        <EditorBody>
          <Table>
            <colgroup>
              <col style={{ width: 21 }} />
              <col style={{ width: 121 }} />
              <col style={{ width: 268 }} />
            </colgroup>
            <thead>
              <tr>
                <HeadIndex />
                <HeadName>属性名称</HeadName>
                <HeadValue />
              </tr>
            </thead>
            <tbody>
              {rows.map((row, i) => (
                <tr key={row.name}>
                  <IndexCell $current={row.current}>
                    <Lat>{i + 1}</Lat>
                  </IndexCell>
                  <NameCell $current={row.current} $color={row.color} $plus={row.plus}>
                    {row.plus && <PlusBox>+</PlusBox>}
                    {mixed(row.name)}
                  </NameCell>
                  <ValueCell>
                    {row.mark && <RebarMark $under={row.under}>{row.mark}</RebarMark>}
                    {mixed(row.value)}
                  </ValueCell>
                </tr>
              ))}
            </tbody>
          </Table>
        </EditorBody>
      </EditorWindow>

      <ControlPanel>
        <ControlTitle>钢筋显示控制面板</ControlTitle>
        <ControlList>
          {controlItems.map((item, i) => (
            <ControlItem key={item}>
              <CheckBox>
                <svg width="8" height="8" viewBox="0 0 8 8">
                  <path d="M1 4l2 2 4-5" fill="none" stroke="#18a018" strokeWidth="1.6" />
                </svg>
              </CheckBox>
              <ItemLabel $focus={i === 0}>{item}</ItemLabel>
            </ControlItem>
          ))}
        </ControlList>
      </ControlPanel>

      <Overlay viewBox="0 0 1194 764">
        <ellipse cx="281.5" cy="282" rx="32.5" ry="17" fill="none" stroke="#f06060" />
        <ellipse cx="858.5" cy="500" rx="87.5" ry="17" fill="none" stroke="#d03030" />
        <polygon points="307,281 745,460 752,469 738,471 742,466 307,282" fill="#f84040" />
      </Overlay>
    </Page>
  );
}
